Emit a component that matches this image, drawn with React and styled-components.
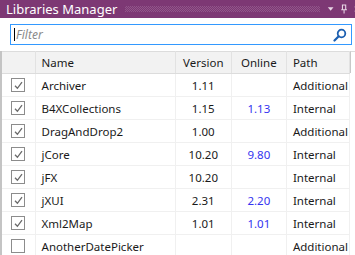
import React from "react";
import styled, { createGlobalStyle } from "styled-components";

const libraries = [
  { name: "Archiver", version: "1.11", online: "", path: "Additional", checked: true },
  { name: "B4XCollections", version: "1.15", online: "1.13", path: "Internal", checked: true },
  { name: "DragAndDrop2", version: "1.00", online: "", path: "Additional", checked: true },
  { name: "jCore", version: "10.20", online: "9.80", path: "Internal", checked: true },
  { name: "jFX", version: "10.20", online: "", path: "Internal", checked: true },
  { name: "jXUI", version: "2.31", online: "2.20", path: "Internal", checked: true },
  { name: "Xml2Map", version: "1.01", online: "1.01", path: "Internal", checked: true },
  { name: "AnotherDatePicker", version: "", online: "", path: "Additional", checked: false },
];

function App() {
  return (
    <>
      <GlobalStyle />
      <Panel>
        <TitleBar>
          <Title>Libraries Manager</Title>
          <Grip />
          <TitleIcons>
            <svg width="9" height="6" viewBox="0 0 9 6">
              <path d="M1 1 L8 1 L4.5 5 Z" fill="#e8d6e6" />
            </svg>
            <svg width="10" height="12" viewBox="0 0 10 12">
              <path d="M3 1 H7 V7 H3 Z M1.5 7 H8.5 M5 7 V11.5" stroke="#e8d6e6" strokeWidth="1.3" fill="none" />
            </svg>
            <svg width="8" height="8" viewBox="0 0 8 8">
              <path d="M1 1 L7 7 M7 1 L1 7" stroke="#e8d6e6" strokeWidth="1.3" />
            </svg>
          </TitleIcons>
        </TitleBar>

        <FilterRow>
          <FilterBox>
            <Caret />
            <Placeholder>Filter</Placeholder>
            <svg width="14" height="14" viewBox="0 0 14 14">
              <circle cx="8.5" cy="5.5" r="3.8" stroke="#1c5fb0" strokeWidth="1.8" fill="none" />
              <path d="M5.7 8.3 L1.5 12.5" stroke="#1c5fb0" strokeWidth="2.2" strokeLinecap="round" />
            </svg>
          </FilterBox>
        </FilterRow>

        <TableArea>
          <Table>
            <colgroup>
              <col style={{ width: 34 }} />
              <col style={{ width: 140 }} />
              <col style={{ width: 56 }} />
              <col style={{ width: 55 }} />
              <col style={{ width: 63 }} />
            </colgroup>
            <thead>
              <tr>
                <Th />
                <Th $align="left">Name</Th>
                <Th>Version</Th>
                <Th>Online</Th>
                <Th $align="left">Path</Th>
              </tr>
            </thead>
            <tbody>
              {libraries.map((lib) => (
                <tr key={lib.name}>
                  <Td>
                    <Check>
                      {lib.checked && (
                        <svg width="11" height="11" viewBox="0 0 11 11">
                          <path d="M2 5.8 L4.4 8.3 L9 2.2" stroke="#6a6a6a" strokeWidth="1.3" fill="none" />
                        </svg>
                      )}
                    </Check>
                  </Td>
                  <Td $align="left">{lib.name}</Td>
                  <Td>{lib.version}</Td>
                  <Td $online>{lib.online}</Td>
                  <Td $align="left">{lib.path}</Td>
                </tr>
              ))}
            </tbody>
          </Table>
          <ScrollStub />
        </TableArea>
      </Panel>
    </>
  );
}

export default App;

const GlobalStyle = createGlobalStyle`
  html, body {
    margin: 0;
    padding: 0;
    background: #ffffff;
    overflow: hidden;
  }
  body {
    font-family: "Noto Sans", "Open Sans", sans-serif;
  }
`;

const Panel = styled.div`
  width: 355px;
  height: 255px;
  overflow: hidden;
  background: #ffffff;
`;

const TitleBar = styled.div`
  height: 18px;
  display: flex;
  align-items: center;
  background: #7d3874;
  padding-left: 6px;
`;

const Title = styled.span`
  color: #ffffff;
  font-size: 13px;
  line-height: 18px;
  white-space: nowrap;
`;

const Grip = styled.div`
  flex: 1;
  height: 6px;
  margin: 0 7px 0 8px;
  background-image: repeating-conic-gradient(#91568a 0 25%, transparent 0 50%);
  background-size: 2px 2px;
`;

const TitleIcons = styled.div`
  display: flex;
  align-items: center;
  gap: 6px;
  width: 34px;
  margin-right: -6px;
`;

const FilterRow = styled.div`
  padding: 6px 3px 0 10px;
  height: 27px;
`;

const FilterBox = styled.div`
  height: 19px;
  border: 1px solid #3399ff;
  display: flex;
  align-items: center;
  padding: 0 4px 0 3px;
`;

const Caret = styled.div`
  width: 1px;
  height: 13px;
  background: #000000;
`;

const Placeholder = styled.span`
  flex: 1;
  margin-left: 1px;
  font-style: italic;
  font-size: 12px;
  color: #8a8a8a;
`;

const TableArea = styled.div`
  display: flex;
  align-items: flex-start;
`;

const Table = styled.table`
  width: 350px;
  table-layout: fixed;
  border-collapse: collapse;
  border-left: 2px solid #c4c4c4;
  font-size: 11.5px;
  color: #1a1a1a;
`;

const Th = styled.th`
  height: 21px;
  padding: 0 6px;
  background: #f2f2f2;
  border-top: 1px solid #dcdcdc;
  border-bottom: 1px solid #dcdcdc;
  border-right: 1px solid #e2e2e2;
  font-weight: normal;
  text-align: ${(p) => p.$align || "center"};
  white-space: nowrap;
`;

const Td = styled.td`
  height: 22px;
  padding: 0 6px;
  border-bottom: 1px solid #f0f0f0;
  border-right: 1px solid #f0f0f0;
  text-align: ${(p) => p.$align || "center"};
  color: ${(p) => (p.$online ? "#3434f0" : "#1a1a1a")};
  white-space: nowrap;
  overflow: hidden;
`;

const Check = styled.div`
  width: 12px;
  height: 12px;
  margin-left: 3px;
  border: 1px solid #8c8c8c;
  background: #ffffff;
  display: flex;
  align-items: center;
  justify-content: center;
`;

const ScrollStub = styled.div`
  width: 4px;
  height: 21px;
  border-top: 1px solid #dcdcdc;
  border-left: 1px solid #c8c8c8;
  background: #ffffff;
`;
